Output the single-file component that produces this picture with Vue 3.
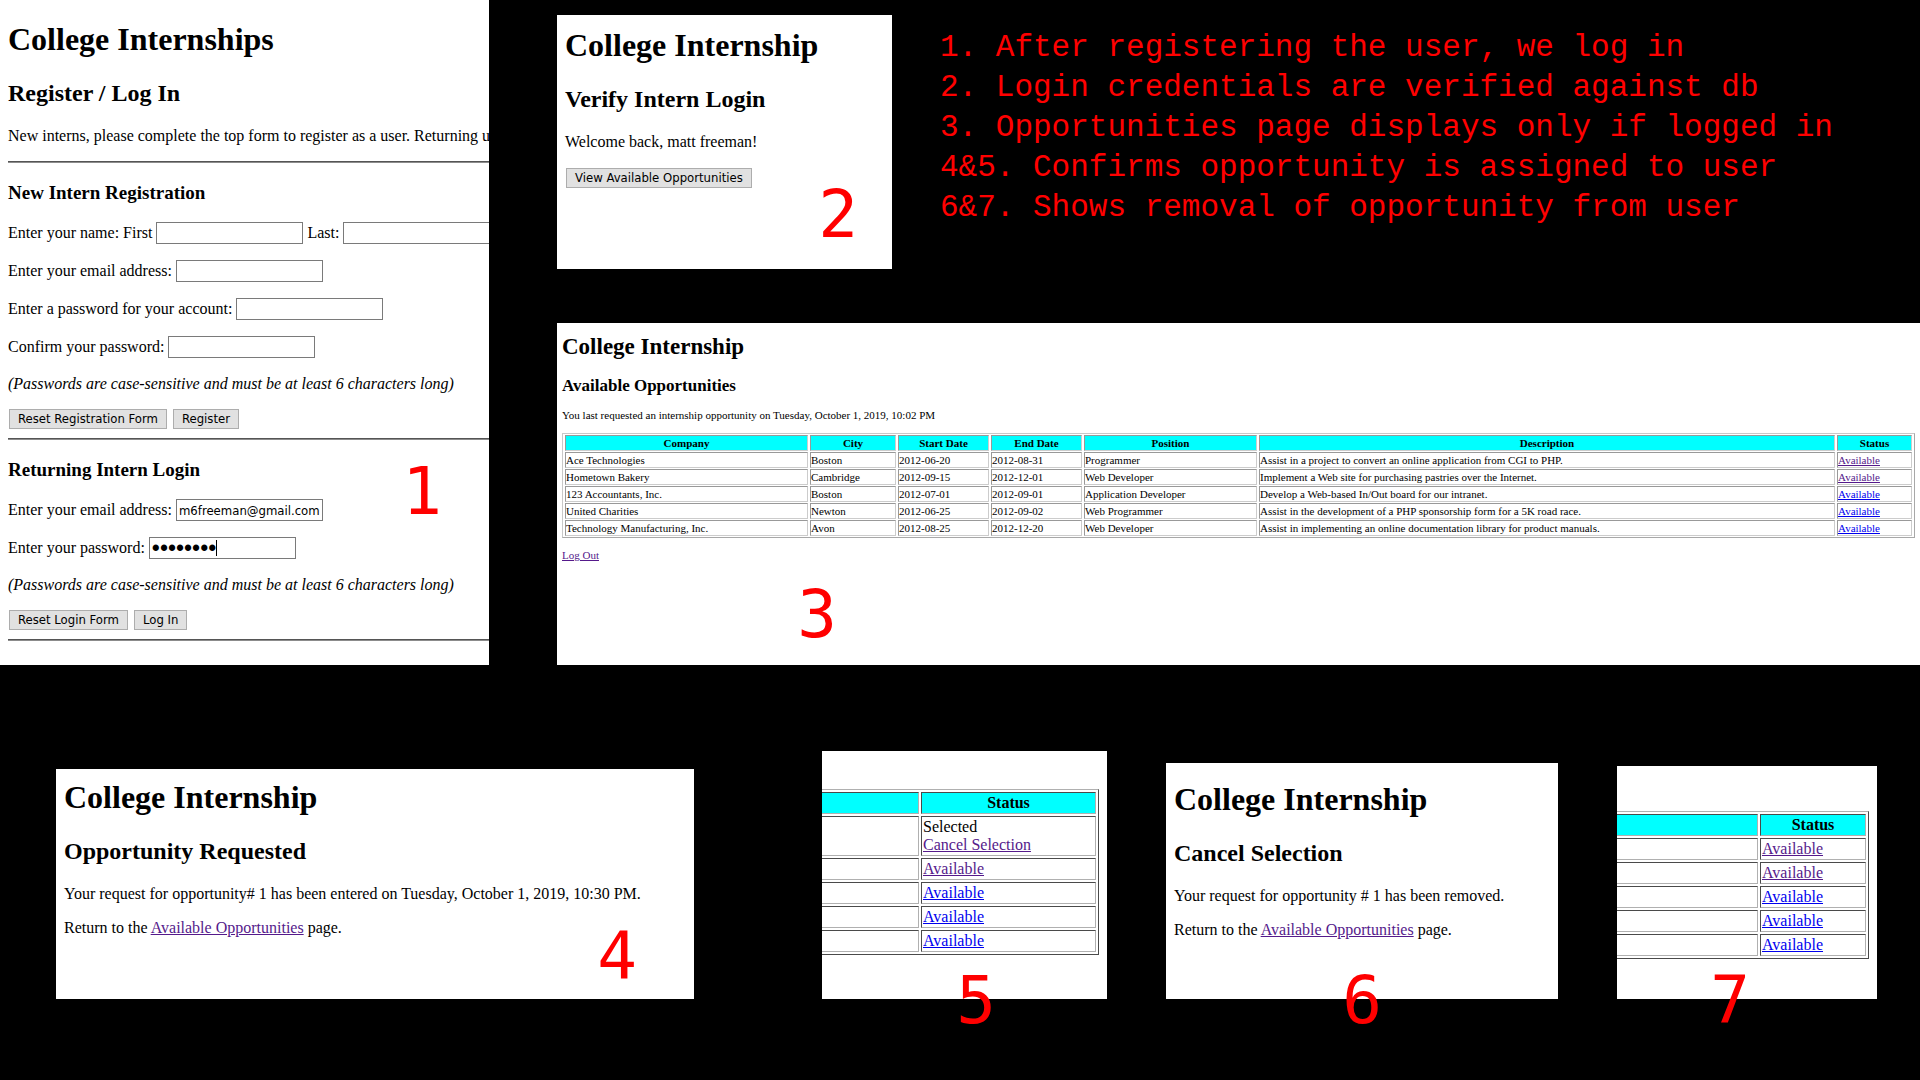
<script setup>
import { ref } from 'vue'

const notes = [
  '1. After registering the user, we log in',
  '2. Login credentials are verified against db',
  '3. Opportunities page displays only if logged in',
  '4&5. Confirms opportunity is assigned to user',
  '6&7. Shows removal of opportunity from user',
]

const columns = ['Company', 'City', 'Start Date', 'End Date', 'Position', 'Description', 'Status']

const opportunities = [
  { company: 'Ace Technologies', city: 'Boston', start: '2012-06-20', end: '2012-08-31', position: 'Programmer', description: 'Assist in a project to convert an online application from CGI to PHP.', visited: true },
  { company: 'Hometown Bakery', city: 'Cambridge', start: '2012-09-15', end: '2012-12-01', position: 'Web Developer', description: 'Implement a Web site for purchasing pastries over the Internet.', visited: true },
  { company: '123 Accountants, Inc.', city: 'Boston', start: '2012-07-01', end: '2012-09-01', position: 'Application Developer', description: 'Develop a Web-based In/Out board for our intranet.', visited: false },
  { company: 'United Charities', city: 'Newton', start: '2012-06-25', end: '2012-09-02', position: 'Web Programmer', description: 'Assist in the development of a PHP sponsorship form for a 5K road race.', visited: false },
  { company: 'Technology Manufacturing, Inc.', city: 'Avon', start: '2012-08-25', end: '2012-12-20', position: 'Web Developer', description: 'Assist in implementing an online documentation library for product manuals.', visited: false },
]

const assigned = [
  { selected: true },
  { visited: true },
  { visited: false },
  { visited: false },
  { visited: false },
]

const email = ref('m6freeman@gmail.com')
const password = ref('password')
</script>

<template>
  <main class="board">
    <div class="top">
      <section class="panel register">
        <div class="page">
          <h1>College Internships</h1>
          <h2>Register / Log In</h2>
          <p>New interns, please complete the top form to register as a user. Returning users</p>
          <hr />
          <h3>New Intern Registration</h3>
          <form @submit.prevent>
            <div class="field">
              <label for="first">Enter your name: First</label>
              <input id="first" type="text" />
              <label for="last">Last:</label>
              <input id="last" type="text" />
            </div>
            <div class="field">
              <label for="new-email">Enter your email address:</label>
              <input id="new-email" type="text" />
            </div>
            <div class="field">
              <label for="new-password">Enter a password for your account:</label>
              <input id="new-password" type="password" />
            </div>
            <div class="field">
              <label for="confirm">Confirm your password:</label>
              <input id="confirm" type="password" />
            </div>
            <p><em>(Passwords are case-sensitive and must be at least 6 characters long)</em></p>
            <div class="actions">
              <button type="reset">Reset Registration Form</button>
              <button type="submit">Register</button>
            </div>
          </form>
          <hr />
          <h3>Returning Intern Login</h3>
          <form @submit.prevent>
            <div class="field">
              <label for="email">Enter your email address:</label>
              <input id="email" v-model="email" type="text" />
            </div>
            <div class="field">
              <label for="password">Enter your password:</label>
              <span class="typing">
                <input id="password" v-model="password" type="password" />
                <span class="caret"></span>
              </span>
            </div>
            <p><em>(Passwords are case-sensitive and must be at least 6 characters long)</em></p>
            <div class="actions">
              <button type="reset">Reset Login Form</button>
              <button type="submit">Log In</button>
            </div>
          </form>
          <hr />
        </div>
        <span class="step step-1">1</span>
      </section>

      <div class="right">
        <div class="intro">
          <section class="panel verify">
            <div class="page">
              <h1>College Internship</h1>
              <h2>Verify Intern Login</h2>
              <p>Welcome back, matt freeman!</p>
              <div class="actions">
                <button type="button">View Available Opportunities</button>
              </div>
            </div>
            <span class="step step-2">2</span>
          </section>
          <ul class="notes">
            <li v-for="note in notes" :key="note">{{ note }}</li>
          </ul>
        </div>

        <section class="panel listing">
          <div class="page small">
            <h1>College Internship</h1>
            <h2>Available Opportunities</h2>
            <p>You last requested an internship opportunity on Tuesday, October 1, 2019, 10:02 PM</p>
            <table class="full">
              <colgroup>
                <col class="c-company" />
                <col class="c-city" />
                <col class="c-date" />
                <col class="c-date" />
                <col class="c-position" />
                <col class="c-description" />
                <col class="c-status" />
              </colgroup>
              <thead>
                <tr>
                  <th v-for="column in columns" :key="column" scope="col">{{ column }}</th>
                </tr>
              </thead>
              <tbody>
                <tr v-for="row in opportunities" :key="row.company">
                  <td>{{ row.company }}</td>
                  <td>{{ row.city }}</td>
                  <td>{{ row.start }}</td>
                  <td>{{ row.end }}</td>
                  <td>{{ row.position }}</td>
                  <td>{{ row.description }}</td>
                  <td><a href="#" :class="{ visited: row.visited }">Available</a></td>
                </tr>
              </tbody>
            </table>
            <p><a href="#" class="visited">Log Out</a></p>
          </div>
          <span class="step step-3">3</span>
        </section>
      </div>
    </div>

    <div class="bottom">
      <section class="panel requested">
        <div class="page">
          <h1>College Internship</h1>
          <h2>Opportunity Requested</h2>
          <p>Your request for opportunity# 1 has been entered on Tuesday, October 1, 2019, 10:30 PM.</p>
          <p>Return to the <a href="#" class="visited">Available Opportunities</a> page.</p>
        </div>
        <span class="step step-4">4</span>
      </section>

      <section class="panel assigned">
        <div class="crop">
          <table class="cut">
            <thead>
              <tr>
                <th></th>
                <th class="status" scope="col">Status</th>
              </tr>
            </thead>
            <tbody>
              <tr v-for="(row, i) in assigned" :key="i">
                <td></td>
                <td v-if="row.selected">Selected<br /><a href="#" class="visited">Cancel Selection</a></td>
                <td v-else><a href="#" :class="{ visited: row.visited }">Available</a></td>
              </tr>
            </tbody>
          </table>
        </div>
        <span class="step step-5">5</span>
      </section>

      <section class="panel cancelled">
        <div class="page">
          <h1>College Internship</h1>
          <h2>Cancel Selection</h2>
          <p>Your request for opportunity # 1 has been removed.</p>
          <p>Return to the <a href="#" class="visited">Available Opportunities</a> page.</p>
        </div>
        <span class="step step-6">6</span>
      </section>

      <section class="panel removed">
        <div class="crop">
          <table class="cut">
            <thead>
              <tr>
                <th></th>
                <th class="status" scope="col">Status</th>
              </tr>
            </thead>
            <tbody>
              <tr v-for="row in opportunities" :key="row.company">
                <td></td>
                <td><a href="#" :class="{ visited: row.visited }">Available</a></td>
              </tr>
            </tbody>
          </table>
        </div>
        <span class="step step-7">7</span>
      </section>
    </div>
  </main>
</template>

<style>
body {
  margin: 0;
  background: #000;
}
</style>

<style scoped>
.board {
  box-sizing: border-box;
  min-height: 100vh;
  padding-bottom: 81px;
  overflow: hidden;
  background: #000;
  color: #000;
  font-family: "Liberation Serif", "Times New Roman", serif;
  font-size: 16px;
  line-height: 18px;
}

/* Overall arrangement */
.top {
  display: grid;
  grid-template-columns: minmax(0, 489fr) minmax(0, 1363fr);
  column-gap: 68px;
}
.right {
  display: flex;
  flex-direction: column;
  justify-content: space-between;
}
.intro {
  display: grid;
  grid-template-columns: minmax(0, 335fr) minmax(0, 1028fr);
  align-items: start;
  padding-top: 15px;
}
.bottom {
  display: grid;
  grid-template-columns: minmax(0, 707fr) minmax(0, 285fr) minmax(0, 392fr) minmax(0, 260fr);
  align-items: end;
  column-gap: 59px;
  padding: 86px 43px 0 56px;
}
.requested {
  margin-right: 69px;
}

/* Panels */
.panel {
  position: relative;
  background: #fff;
}
.page {
  padding: 0 0 0 8px;
  overflow: hidden;
  white-space: nowrap;
}
.register .page {
  padding-top: 21px;
  padding-bottom: 16px;
}
.verify .page {
  padding-top: 12px;
  padding-bottom: 80px;
}
.requested .page {
  padding-top: 10px;
  padding-bottom: 62px;
}
.cancelled .page {
  padding-top: 18px;
  padding-bottom: 60px;
}

h1,
h2,
h3,
p {
  margin: 0;
}
h1 {
  font-size: 32px;
  line-height: 37px;
}
h2 {
  margin: 22px 0 20px;
  font-size: 24px;
  line-height: 27px;
}
h3 {
  margin: 19px 0;
  font-size: 19px;
  line-height: 21px;
}
p + p,
p + hr {
  margin-top: 16px;
}
hr {
  margin: 8px 0;
  border: 0;
  border-top: 1px solid #555;
  border-bottom: 1px solid #8c8c8c;
}

/* Forms */
.field {
  display: flex;
  align-items: center;
  gap: 4px;
  line-height: 22px;
}
.field + .field {
  margin-top: 16px;
}
form p {
  margin-top: 17px;
}
input {
  box-sizing: border-box;
  flex: none;
  width: 147px;
  height: 22px;
  margin: 0;
  padding: 0 2px;
  border: 1px solid #7a7a7a;
  border-radius: 0;
  background: #fff;
  color: #000;
  font-family: "DejaVu Sans Condensed", "DejaVu Sans", sans-serif;
  font-size: 13px;
}
input[type="password"] {
  font-family: "Liberation Sans", Arial, sans-serif;
  font-size: 23px;
}
.typing {
  display: flex;
  position: relative;
}
.caret {
  position: absolute;
  top: 3px;
  left: 67px;
  width: 1px;
  height: 16px;
  background: #000;
}
.actions {
  display: flex;
  gap: 6px;
  margin-top: 16px;
  padding: 1px;
}
form .actions {
  margin-top: 15px;
}
button {
  height: 20px;
  padding: 0 8px;
  border: 1px solid #adadad;
  border-radius: 0;
  background: #e1e1e1;
  color: #000;
  font-family: "DejaVu Sans Condensed", "DejaVu Sans", sans-serif;
  font-size: 13px;
  line-height: 18px;
}

a {
  color: #00e;
  text-decoration: underline;
}
a.visited {
  color: #551a8b;
}

/* Notes */
.notes {
  margin: 13px 0 0;
  padding: 0 0 0 48px;
  color: #f00;
  font-family: "Liberation Mono", monospace;
  font-size: 31px;
  line-height: 40px;
  list-style: none;
  white-space: nowrap;
}

/* Scaled-down listing */
.page.small {
  padding: 11px 5px 103px 5px;
  font-size: 11px;
  line-height: 13px;
}
.small h1 {
  font-size: 23px;
  line-height: 26px;
}
.small h2 {
  margin: 16px 0 13px;
  font-size: 17px;
  line-height: 20px;
}

/* Tables */
table {
  width: 100%;
  border: 1px solid;
  border-color: #b0b0b0 #4a4a4a #4a4a4a #b0b0b0;
  border-collapse: separate;
  border-spacing: 2px;
  table-layout: fixed;
}
th,
td {
  height: 18px;
  padding: 1px;
  border: 1px solid;
  border-color: #4a4a4a #b0b0b0 #b0b0b0 #4a4a4a;
  text-align: left;
}
th {
  background: #0ff;
  font-weight: bold;
  text-align: center;
}
.full {
  margin: 11px 0;
  border-color: #c8c8c8 #a8a8a8 #a8a8a8 #c8c8c8;
  border-spacing: 2px 1px;
}
.full th,
.full td {
  height: 14px;
  padding: 0;
  border-color: #999 #ccc #ccc #999;
  line-height: 14px;
}
.c-company {
  width: 243px;
}
.c-city {
  width: 86px;
}
.c-date {
  width: 91px;
}
.c-position {
  width: 173px;
}
.c-description {
  width: 576px;
}
.c-status {
  width: 75px;
}
.crop {
  padding-right: 8px;
  overflow: hidden;
}
.assigned .crop {
  padding-top: 38px;
  padding-bottom: 44px;
}
.removed .crop {
  padding-top: 45px;
  padding-bottom: 40px;
}
.cut {
  width: calc(100% + 4px);
  margin-left: -4px;
}
.assigned .status {
  width: 171px;
}
.removed .status {
  width: 102px;
}

/* Step numbers laid over the panels */
.step {
  position: absolute;
  width: 40px;
  color: #f00;
  font-family: "DejaVu Sans Mono", monospace;
  font-size: 66px;
  line-height: 48px;
  text-align: center;
}
.step-1 {
  right: 47px;
  bottom: 149px;
}
.step-2 {
  right: 34px;
  bottom: 30px;
}
.step-3 {
  left: 240px;
  bottom: 26px;
}
.step-4 {
  right: 57px;
  bottom: 19px;
}
.step-5,
.step-6,
.step-7 {
  bottom: -26px;
}
.step-5 {
  left: 134px;
}
.step-6 {
  left: 176px;
}
.step-7 {
  left: 93px;
}
</style>
